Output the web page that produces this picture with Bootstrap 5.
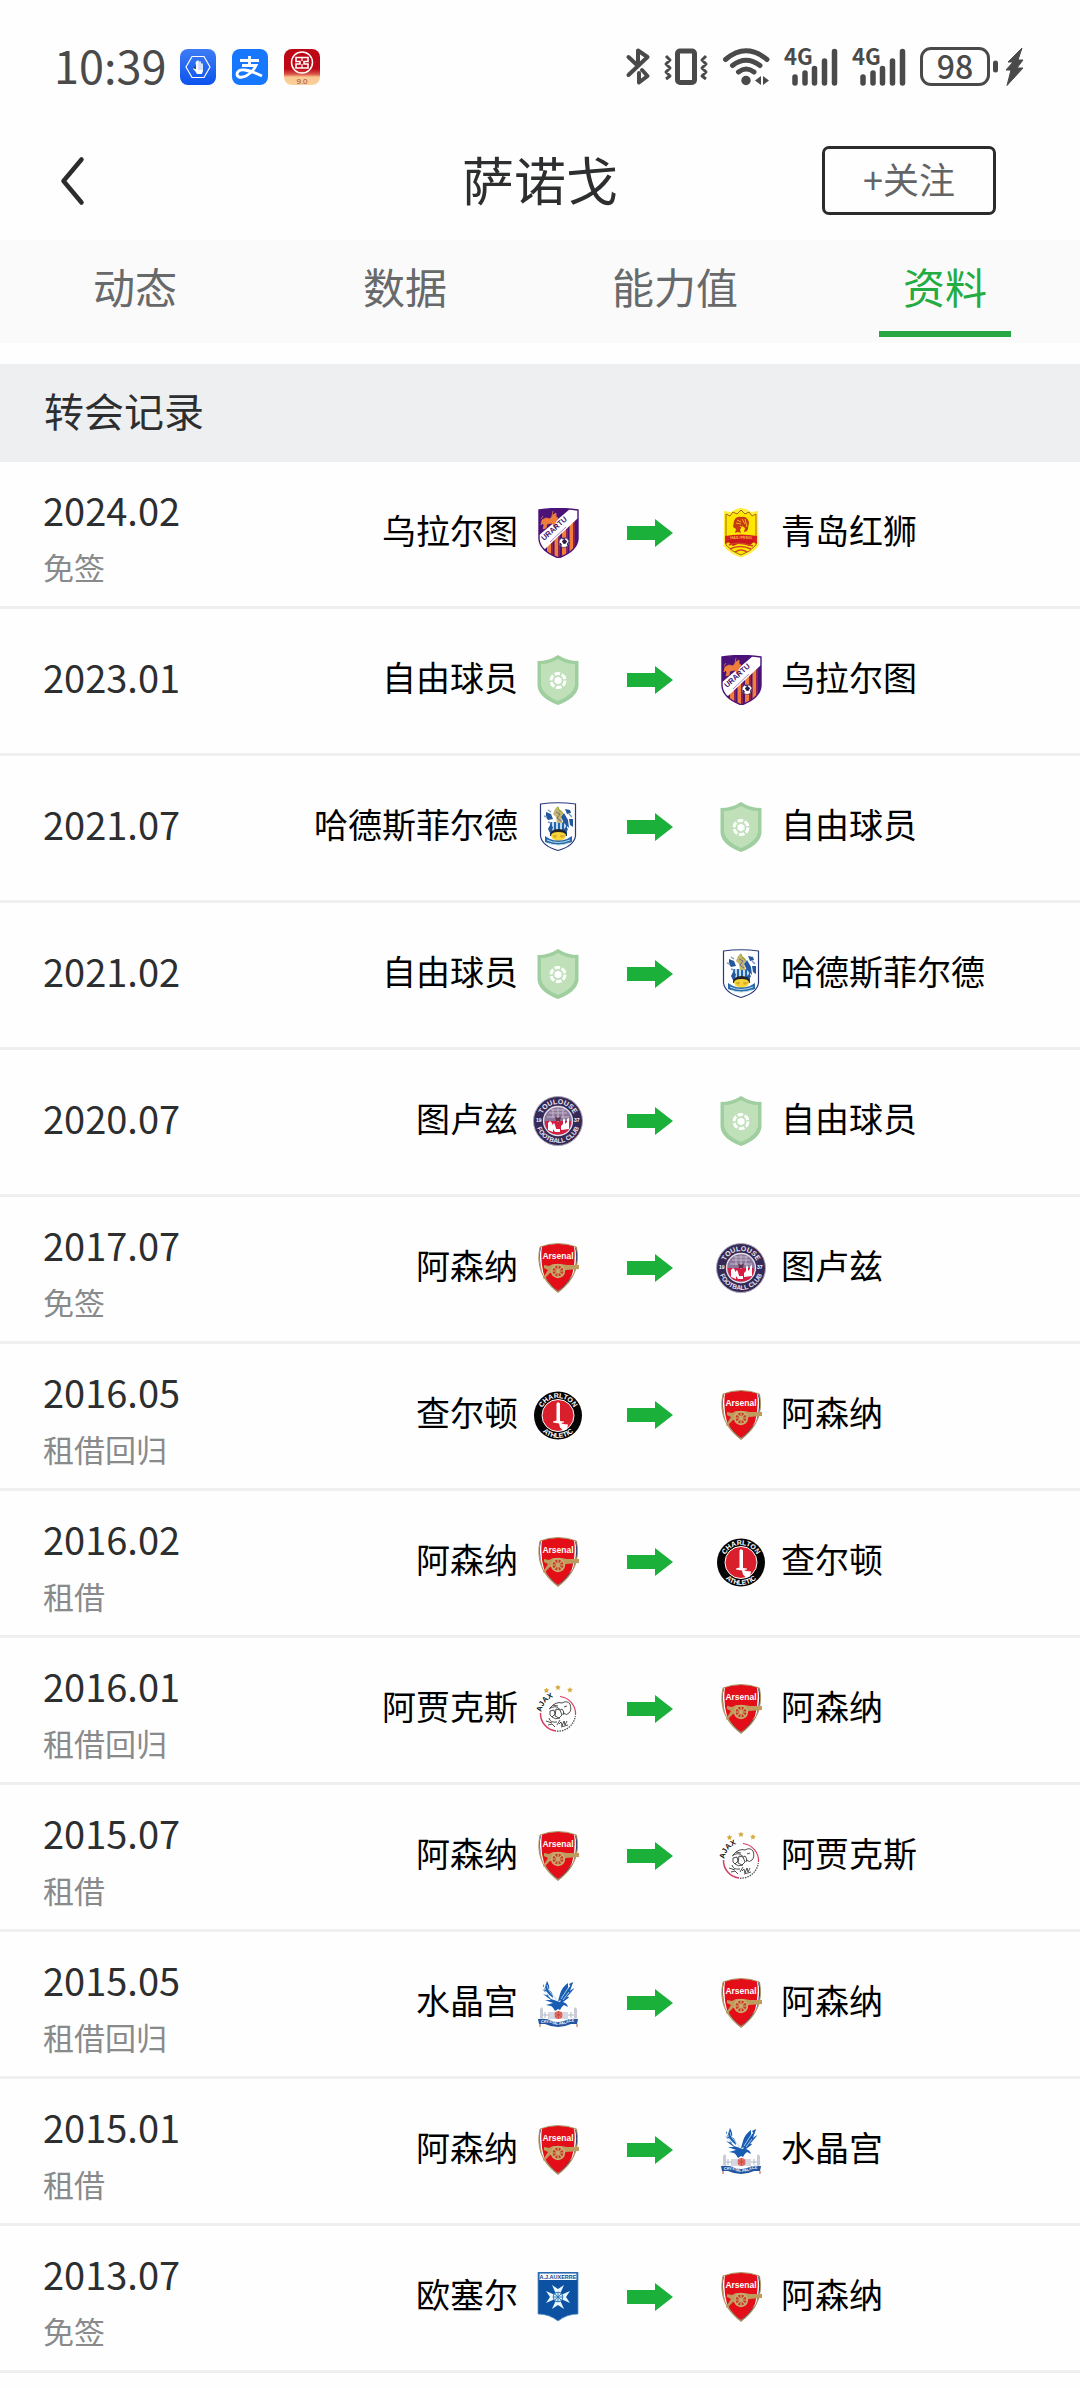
<!DOCTYPE html>
<html lang="zh-CN">
<head>
<meta charset="utf-8">
<meta name="viewport" content="width=device-width, initial-scale=1">
<title>萨诺戈 - 转会记录</title>
<link href="https://cdn.jsdelivr.net/npm/bootstrap@5.3.0/dist/css/bootstrap.min.css" rel="stylesheet">
<style>
  body { background: #fefefe; color: #2d2e2f; font-family: "Noto Sans CJK SC", "Liberation Sans", sans-serif; }
  svg { display: block; flex: none; overflow: visible; }
  .statusbar { height: 133px; padding: 0 56px 0 54px; color: #4a4a4a; }
  .clock { font-size: 45px; line-height: 45px; padding-bottom: 5px; margin-right: 14px; }
  .apps { gap: 16px; }
  .signals { gap: 14px; }
  .battery { width: 70px; height: 39px; border: 3px solid #4a4a4a; border-radius: 11px; font-size: 32px; line-height: 30px; font-weight: 500; text-align: center; }
  .titlebar { height: 107px; padding: 0 60px 12px; }
  .side { flex: 1 1 0; }
  .name-title { font-size: 52px; line-height: 60px; padding-bottom: 4px; margin: 0; font-weight: 400; }
  .back { border: 0; background: none; padding: 0; }
  .follow { width: 174px; height: 69px; padding: 0 0 5px; margin-right: 24px; border: 3px solid #2b2c2d; border-radius: 7px; font-size: 36px; line-height: 40px; color: #636465; }
  .tabs { height: 103px; background: #fafafa; margin-bottom: 21px; }
  .tabs .nav-link { height: 97px; padding: 17px 0 0; font-size: 42px; line-height: 57px; color: #67696a; width: 132px; margin: 0 auto; white-space: nowrap; }
  .tabs .nav-link.active { color: #22ac42; border-bottom: 6px solid #2aa745; }
  .section-title { background: #eeeff1; font-size: 40px; line-height: 60px; height: 98px; padding: 16px 44px 0; margin: 0; font-weight: 400; }
  .record { height: 147px; border-bottom: 3px solid #efefef; padding-bottom: 3px; }
  .origin { flex: 583 1 0; }
  .target { flex: 364 1 0; }
  .when { width: 240px; padding-left: 43px; font-size: 38px; line-height: 57px; padding-bottom: 6px; }
  .when.two { padding: 19px 0 0 43px; }
  .kind { font-size: 31px; line-height: 57px; color: #888a8b; }
  .club { color: #000; font-size: 34px; line-height: 44px; padding-bottom: 5px; white-space: nowrap; }
  .pair { gap: 15px; }
  .way { flex: 0 0 133px; }
</style>
<script src="https://cdn.jsdelivr.net/npm/bootstrap@5.3.0/dist/js/bootstrap.bundle.min.js"></script>
</head>
<body>

<svg width="0" height="0" class="position-absolute" aria-hidden="true">
  <defs>
    <clipPath id="uc"><path d="M6 2Q25-1 45 2V31Q44 43 25.500 50Q7 43 6 31Z"/></clipPath>
    <clipPath id="ac"><path d="M7 4Q25-3 43.500 4Q49 32 25 49.500Q1 32 7 4Z"/></clipPath>
    <symbol id="arrow" viewBox="0 0 46 28"><path d="M0 7H28V0L46 14L28 28V21H0Z" fill="#1ab03a"/></symbol>

    <symbol id="urartu" viewBox="0 0 50 50">
      <g clip-path="url(#uc)">
        <path d="M0 0H50V50H0Z" fill="#4b1278"/>
        <path d="M14 30H18V50H14ZM21.500 24H25V50H21.500ZM29 18H33V50H29ZM36.500 12H40V50H36.500Z" fill="#ef7d3c"/>
        <path d="M18 30H20V50H18ZM25 24H27V50H25ZM33 18H35V50H33ZM40 12H42V50H40Z" fill="#8f2150"/>
        <path d="M5 28L37 1H46V9L12 41L5 38Z" fill="#fff"/>
      </g>
      <path d="M8 17l1-5 4-2 4 1 3-4 3-2v4l2 1-3 5 1 4-2-1-2-3-5 1-1 4-3 1 1-4-2-2zM8 11l2-3M19 8l1-5" fill="#ef7d3c" stroke="#ef7d3c" stroke-width=".8"/>
      <text transform="translate(11 33) rotate(-42)" font-family="Liberation Sans" font-weight="700" font-size="7.500" fill="#3c126d">URARTU</text>
      <path d="M17 34L33 19" stroke="#a98bc4" stroke-width="1"/>
      <circle cx="31" cy="34.500" r="5" fill="#fff" stroke="#3a2260" stroke-width=".6"/>
      <path d="M29.500 33l2-1.500 2 1.500-1 2.300h-2zM26.500 35l1.700 1-.3 2M35.500 34l-1 2 .5 1.500M29 30.500l2 .5 1.500-1" fill="#2b1748" stroke="#2b1748"/>
      <path d="M6 2Q25-1 45 2V31Q44 43 25.500 50Q7 43 6 31Z" fill="none" stroke="#4b1278" stroke-width="1.400"/>
    </symbol>

    <symbol id="qingdao" viewBox="0 0 50 50">
      <path d="M8 3L15 4L20 1L25 0L30 1L35 4L42 3L42.500 38Q36 46 25 49.500Q14 46 7.500 38Z" fill="#ffee3d"/>
      <path d="M10 6L14 8L17 4L21 6L25 2L29 6L33 4L36 8L40 6V37Q34 44 25 47Q16 44 10 37Z" fill="#ffe800" stroke="#a7641b" stroke-width="1"/>
      <path d="M18 13q2-5 7-4 6-1 8 5l-1 7q-1 3-4 3l1-4-3-2-2 4 1 3-3-1-3 1 1-4-3-2z" fill="#c53a14"/>
      <path d="M21 12l4 2M26 11l3 5M24 18l4 3M20 15l5 1M29 11l2 8" stroke="#ffcf18" stroke-width=".8"/>
      <path d="M9 28Q25 25 41 28V36Q34 32 25 32Q16 32 9 36Z" fill="#d61f20"/>
      <text x="25" y="30.500" text-anchor="middle" font-family="Liberation Sans" font-weight="700" font-size="4" fill="#f8b23f">HAILIFENG</text>
      <path d="M11 33Q25 28 39 33L33 38Q25 33 17 38Z" fill="#c9161c"/>
      <path d="M13 37Q22 33 37 38M14 41Q24 36 35 41M19 44Q25 40 31 44" stroke="#d0442a" stroke-width="1.500" fill="none"/>
    </symbol>

    <symbol id="free" viewBox="0 0 50 50">
      <path d="M25 0Q34 6 45.500 6V31Q44 43 25 50Q6 43 4.500 31V6Q16 6 25 0Z" fill="#9fce9f"/>
      <path d="M25 4Q33 9 42 9V30Q40 40 25 46Q10 40 8 30V9Q17 9 25 4Z" fill="#bfe0b9"/>
      <path d="M25 21.500l3.500 2v4l-3.500 2-3.500-2v-4z" fill="#fff"/>
      <circle cx="25" cy="25.500" r="7" fill="none" stroke="#fff" stroke-width="3" stroke-dasharray="5.600 1.730"/>
    </symbol>

    <symbol id="huddersfield" viewBox="0 0 50 50">
      <path d="M7.500 2Q25-.5 42.500 2V34Q41 44 25 48.500Q9 44 7.500 34Z" fill="#fff" stroke="#29397e" stroke-width="1.200"/>
      <path d="M17 20h17v13H17z" fill="#1f68b3"/>
      <path d="M20 19v14M24 19v14M28 19v14M32 19v14" stroke="#fff" stroke-width="1.500"/>
      <path d="M22 7l3-3 1 3 4 3-2 6 2 5h-6l-1-6-3-3z" fill="#c6b56e"/>
      <path d="M23 10l4 2-3 4 4 3" stroke="#6d6b87" fill="none"/><path d="M27 8l4 6M25 5l2 5" stroke="#98a92c"/>
      <path d="M31 11l4 7 1 8-5-5-3-6zM13 10l5 2 2 5-5 1-2-3zM32 7l5 1 1 3-4 1zM36 17h4v8l-3-2zM11 20l2-1M15 27l2-4 3 2-2 8zM35 27l-2-2-3 3 2 5z" fill="#24579c"/>
      <path d="M11 14l3 1M15 20l3 1M36 12l3 3M15 8l3 2" stroke="#809ac4" stroke-width="1.500"/>
      <path d="M17 34Q17 27 25.500 27Q34 27 34 34Z" fill="#21242a"/>
      <path d="M18 33Q19 30 25.500 30Q32 30 33 33Q33 38 25.500 39Q18 38 18 33Z" fill="#f7d438"/>
      <path d="M22 33v3M29 33v3M20 34h4M27 34h5" stroke="#c29722" stroke-width=".8"/>
      <path d="M12 34L17 37Q25 40 34 37L39 34V40Q25 46 12 40Z" fill="#2869a9"/>
      <path d="M14 38Q25 43 37 38M15 41Q25 45 36 41" fill="none" stroke="#b8dcec" stroke-width="1"/>
    </symbol>

    <symbol id="toulouse" viewBox="0 0 50 50">
      <circle cx="25" cy="25" r="24.500" fill="#352a57" stroke="#aaa3b8" stroke-width="1"/>
      <circle cx="25" cy="25" r="14.500" fill="#8b779b" stroke="#e5dfe8" stroke-width="1.300"/>
      <path d="M12 25H38Q38 38 25 38.500Q12 38 12 25Z" fill="#d51e42"/>
      <path d="M16 17h18M14 21h22M18 14h14M25 12v14M20 13v9M30 13v9" stroke="#c5b7c8" stroke-width="1"/>
      <path d="M22 20l3 2 3-2-1 5h-4z" fill="#5c3652"/>
      <path d="M15 34v-7l2-2 2 2v2l2-2 1 2 2 7h-2l-2-3v3zM28 34v-4l2-2v-4l1-2 1 2v4l2-2v-3l2-1v11zM23 33h4v3h-4z" fill="#fff"/>
      <path id="tt" d="M8 25A17 17 0 0 1 42 25" fill="none"/><path id="tb" d="M3 25A22 22 0 0 0 47 25" fill="none"/>
      <text font-family="Liberation Sans" font-weight="700" font-size="7" fill="#ece8f0" text-anchor="middle"><textPath href="#tt" startOffset="50%">TOULOUSE</textPath></text>
      <text font-family="Liberation Sans" font-weight="700" font-size="6.500" fill="#ece8f0" text-anchor="middle"><textPath href="#tb" startOffset="50%">FOOTBALL CLUB</textPath></text>
      <text x="3" y="26" font-family="Liberation Sans" font-weight="700" font-size="5" fill="#fff">19</text><text x="41" y="26" font-family="Liberation Sans" font-weight="700" font-size="5" fill="#fff">37</text>
    </symbol>

    <symbol id="arsenal" viewBox="0 0 50 50">
      <g clip-path="url(#ac)">
        <path d="M0 0H50V50H0Z" fill="#c5a55d"/>
        <path d="M7 5Q25-1 43.500 5Q48 31 25 48.500Q3 31 7 5Z" fill="#243b70"/>
        <path d="M8 4Q25-1 42 4Q45 17 40 32L25 48L10 32Q5 17 8 4Z" fill="#fff"/>
        <path d="M9 3Q25-1 41 3Q43 18 39 32Q34 41 25 48Q16 41 11 32Q7 18 9 3Z" fill="#e30e17"/>
      </g>
      <path d="M7 4Q25-3 43.500 4Q49 32 25 49.500Q1 32 7 4Z" fill="none" stroke="#a98b60" stroke-width=".9"/>
      <text x="25" y="15.500" text-anchor="middle" font-family="Liberation Sans" font-weight="700" font-size="8.500" fill="#fff">Arsenal</text>
      <path d="M11 22l5 1 4-2h8l6 1h12v4l-13 1-5 3H17l-6 6-1-1 5-8-4-2z" fill="#bd9c5d"/>
      <circle cx="25" cy="28" r="6.300" fill="#c83a27" stroke="#c9ad70" stroke-width="1.700"/>
      <path d="M25 21v14M18 28h14M20 23l10 10M30 23L20 33" stroke="#c9ad70" stroke-width="1.200"/>
    </symbol>

    <symbol id="charlton" viewBox="0 0 50 50">
      <circle cx="25" cy="25.500" r="24" fill="#050505"/>
      <circle cx="25" cy="25.500" r="16" fill="#d91f2c" stroke="#fff" stroke-width="1"/>
      <path d="M23.500 13.500L25 12l2 1.500V31l4 .5v1l-3 .6 2 1 5 .4-1 5-4 1-3-3-1-4-6-1v-1l3.500-1z" fill="#fff"/>
      <path id="ct" d="M7.500 25.500A17.500 17.500 0 0 1 42.500 25.500" fill="none"/><path id="cb" d="M2.500 25.500A22.500 22.500 0 0 0 47.500 25.500" fill="none"/>
      <text font-family="Liberation Sans" font-weight="700" font-size="7" fill="#fff" text-anchor="middle"><textPath href="#ct" startOffset="50%">CHARLTON</textPath></text>
      <text font-family="Liberation Sans" font-weight="700" font-size="7" fill="#fff" text-anchor="middle"><textPath href="#cb" startOffset="50%">ATHLETIC</textPath></text>
    </symbol>

    <symbol id="ajax" viewBox="0 0 50 50">
      <g fill="#d5aa42"><path id="st" d="M13.500 3.500l.8 1.800 2 .2-1.400 1.400.3 2-1.700-1-1.800 1 .3-2-1.400-1.400 2-.2z"/><use href="#st" x="11.500" y="-3"/><use href="#st" x="23.500" y="-.5"/></g>
      <path d="M27 12.500A17.500 17.500 0 0 1 42.500 31" fill="none" stroke="#d53d62" stroke-width="1.200"/>
      <path d="M7.500 29A17.500 17.500 0 0 0 23 47" fill="none" stroke="#d53d62" stroke-width="1.500"/>
      <path d="M24 47.200A17.500 17.500 0 0 0 42.300 32" fill="none" stroke="#555" stroke-width="1.300" stroke-dasharray="1.500 1"/>
      <path id="aj" d="M8.500 28A17 17 0 0 1 27 12.500" fill="none"/>
      <text font-family="Liberation Sans" font-weight="700" font-size="7.500" fill="#111"><textPath href="#aj">AJAX</textPath></text>
      <path d="M17 24Q23 17 29 19Q34 16 37 20Q39 26 36 29Q34 32 30 29M16 25q6-4 9-1t4 1q3 3 1 6M17 27l4-1 1 4-3 3-2-2zM23 25l4 1 2 5-3 3-4-2zM19 33q3 3 8 1M16 34q1 5 8 4M27 36l-3 5M13 37l6 2M15 41l4-1 3 3M26 40l2-2 1 4 2-5 1 4 2-4M28 43l7-2M20 21l5 1M31 23l3-1" fill="none" stroke="#222" stroke-width=".8"/>
    </symbol>

    <symbol id="palace" viewBox="0 0 50 50">
      <path d="M11 6Q10 14 18 21L27 24Q30 17 40 4L37 13Q43 8 40 12L34 19Q38 18 34 21L30 24Q34 25 35 29L31 27Q28 29 27 32L25 31L22 33Q20 29 18 28L13 27L20 25L12 22L18 22L10 16L16 18L9 11L14 14L10 8ZM14 3Q17 8 16 12Q20 14 20 20Q13 15 12 9Z" fill="#195db2"/>
      <path d="M35 5Q29 9 27 16L25 23L30 22L35 14ZM36 6L40 4L38 9Z" fill="#195db2"/>
      <path d="M14 7Q15 14 24 21M37 7L28 21M36 14L30 22M20 17l3 5" stroke="#c9e5f7" stroke-width=".8" fill="none"/>
      <path d="M15 34h20v7H15z" fill="#d5d8df"/><path d="M7 31l2-2 1 2v9H7zM41 31l1-2 2 2v9h-3z" fill="#c9cbd4"/>
      <path d="M10 37h6M35 37h6M12 34v6M38 34v6" stroke="#aeb8c9" stroke-width="1"/>
      <circle cx="25.500" cy="37" r="4" fill="#e27268"/><path d="M22 35l7 4M22 39l7-4M25.500 33v8" stroke="#c3423f" stroke-width=".7"/>
      <path d="M5 41Q14 40 19 43Q25 45 31 43Q37 40 45 41L44 46L38 46Q25 52 12 46L6 46Z" fill="#2254a2"/>
      <path id="cp" d="M8 45Q15 44 20 46Q26 48 32 46Q38 43 43 44" fill="none"/>
      <text font-family="Liberation Sans" font-weight="700" font-size="3.800" fill="#fff"><textPath href="#cp">CRYSTAL PALACE</textPath></text>
      <path d="M7 46v3M44 46v3" stroke="#cc8e87" stroke-width="1.500"/>
    </symbol>

    <symbol id="auxerre" viewBox="0 0 50 50">
      <path d="M5 0H45V42Q34 42 25 49Q16 42 5 42Z" fill="#0c51a2" stroke="#5a91c4" stroke-width=".8"/>
      <path d="M6.500 1.500H43.500V8H6.500Z" fill="#f8fbff"/>
      <text x="25" y="7" text-anchor="middle" font-family="Liberation Sans" font-weight="700" font-size="5.500" fill="#174680">A.J.AUXERRE</text>
      <path id="ax" d="M23 22L19 13L25 17L31 13L27 22Z" fill="#e8f8ff"/>
      <use href="#ax" transform="rotate(90 25 25)"/><use href="#ax" transform="rotate(180 25 25)"/><use href="#ax" transform="rotate(270 25 25)"/>
      <circle cx="25" cy="25" r="4.800" fill="#c9eafa" stroke="#2769ac" stroke-width="1"/>
      <path d="M25 21v8M21 25h8M22 22l6 6M28 22l-6 6" stroke="#2769ac" stroke-width=".8"/>
    </symbol>

    <symbol id="cell" viewBox="0 0 54 39" overflow="visible">
      <text x="0" y="18" font-family="Noto Sans CJK SC, sans-serif" font-weight="700" font-size="22" fill="#4a4a4a">4G</text>
      <path d="M11 30v6M21 26v10M30.500 21.500V36M40.500 14v22M50.500 4.500V36" stroke="#4a4a4a" stroke-width="5.500" stroke-linecap="round"/>
    </symbol>
    <linearGradient id="blue" x2="0" y2="1"><stop stop-color="#3e7cf5"/><stop offset="1" stop-color="#0c53ee"/></linearGradient>
    <linearGradient id="bank" x2="0" y2="1"><stop offset=".55" stop-color="#bd0716"/><stop offset=".7" stop-color="#d9564a"/><stop offset=".78" stop-color="#f9c990"/><stop offset="1" stop-color="#fbd09c"/></linearGradient>
  </defs>
</svg>

<div class="statusbar d-flex align-items-center justify-content-between">
  <div class="d-flex align-items-center">
    <span class="clock">10:39</span>
    <div class="apps d-flex">
      <svg width="36" height="36" viewBox="0 0 36 36"><rect width="36" height="36" rx="8" fill="url(#blue)"/><path d="M12 7.500H24L30 18L24 28.500H12L6 18Z" fill="none" stroke="#fff" stroke-width="1.200"/><path d="M14 20l2.500 2V13M18 21v-9M20 21v-8M22 22v-7" stroke="#fff" stroke-width="1.600" stroke-linecap="round"/><path d="M14 20l3 1h6l-1 4h-5z" fill="#fff"/></svg>
      <svg width="36" height="36" viewBox="0 0 36 36"><rect width="36" height="36" rx="8" fill="#1777ff"/><path d="M8 11.500H27M17.500 7V16M10 16.500H24Q21 23 14 27Q7 30 5 26Q5 20 13 21Q20 22 30 27" fill="none" stroke="#fff" stroke-width="2.800"/></svg>
      <svg width="36" height="36" viewBox="0 0 36 36"><rect width="36" height="36" rx="8" fill="url(#bank)"/><circle cx="18" cy="13.500" r="10.500" fill="none" stroke="#fff" stroke-width="1.500"/><path d="M12 8.500H24V12.500H20V15H24V19H12V15H16V12.500H12Z" fill="none" stroke="#fff" stroke-width="1.600"/><path d="M18 8v4M18 15v4" stroke="#fff" stroke-width="1.200"/><text x="18" y="34.500" text-anchor="middle" font-family="Liberation Sans" font-size="8" fill="#a3452d">9.0</text></svg>
    </div>
  </div>
  <div class="signals d-flex">
    <svg width="24" height="39" viewBox="0 0 24 39" fill="none" stroke="#4a4a4a" stroke-width="4" stroke-linejoin="round" stroke-linecap="round"><path d="M2.500 10L12 19M12 16V3.500L21.500 10L2.500 28M16 23L21.500 29L13 35.500V26"/></svg>
    <svg width="44" height="39" viewBox="0 0 44 39" fill="none" stroke="#4a4a4a"><rect x="13.500" y="4" width="17" height="31.500" rx="2.500" stroke-width="5"/><path d="M2 9l4 4-4 4 4 4-4 4 4 4-4 3M42 9l-4 4 4 4-4 4 4 4-4 4 4 3" stroke-width="3" stroke-linejoin="round"/></svg>
    <svg width="48" height="39" viewBox="0 0 48 39" fill="none" stroke="#4a4a4a" stroke-width="5" stroke-linecap="round"><path d="M3.500 12.500Q24-5 45 12.500M10.500 18.500Q24 8 38 18.500M16.500 25Q24 19 32 25"/><circle cx="24" cy="33.500" r="4.700" fill="#4a4a4a" stroke="none"/><path d="M33 33.500l6-4.500v9zM41 29l6 4.500-6 4.500z" fill="#4a4a4a" stroke="none"/></svg>
    <svg width="54" height="39"><use href="#cell"/></svg>
    <svg width="54" height="39"><use href="#cell"/></svg>
    <div class="d-flex"><div class="battery">98</div><svg width="34" height="39" viewBox="0 0 34 39"><path d="M5.500 16v7" stroke="#4a4a4a" stroke-width="5" stroke-linecap="round"/><path d="M32 1L18 15H23L16 23H21L17 38.500L33 21H27L33 13H28Z" fill="#4a4a4a" stroke="#4a4a4a" stroke-linejoin="round"/></svg></div>
  </div>
</div>

<header class="titlebar d-flex align-items-center">
  <div class="side d-flex"><button class="back" type="button" aria-label="返回"><svg width="26" height="50" viewBox="0 0 26 50"><path d="M21.500 3.500L3.500 25L21.500 46.500" fill="none" stroke="#2b2c2d" stroke-width="4.500" stroke-linecap="round" stroke-linejoin="round"/></svg></button></div>
  <h1 class="name-title">萨诺戈</h1>
  <div class="side d-flex justify-content-end"><button class="btn follow" type="button">+关注</button></div>
</header>

<nav class="tabs nav nav-fill flex-nowrap text-center">
  <div class="col-3"><a class="nav-link" href="#">动态</a></div>
  <div class="col-3"><a class="nav-link" href="#">数据</a></div>
  <div class="col-3"><a class="nav-link" href="#">能力值</a></div>
  <div class="col-3"><a class="nav-link active" aria-current="page" href="#">资料</a></div>
</nav>

<main>
  <h2 class="section-title">转会记录</h2>
  <ul class="list-unstyled m-0">
    <li class="record d-flex"><div class="origin d-flex"><div class="when two">2024.02<div class="kind">免签</div></div><div class="pair d-flex align-items-center ms-auto"><span class="club">乌拉尔图</span><svg width="50" height="50"><use href="#urartu"/></svg></div></div><div class="way d-flex align-items-center justify-content-center"><svg width="46" height="28"><use href="#arrow"/></svg></div><div class="target pair d-flex align-items-center"><svg width="50" height="50"><use href="#qingdao"/></svg><span class="club">青岛红狮</span></div></li>
    <li class="record d-flex"><div class="origin d-flex"><div class="when align-self-center">2023.01</div><div class="pair d-flex align-items-center ms-auto"><span class="club">自由球员</span><svg width="50" height="50"><use href="#free"/></svg></div></div><div class="way d-flex align-items-center justify-content-center"><svg width="46" height="28"><use href="#arrow"/></svg></div><div class="target pair d-flex align-items-center"><svg width="50" height="50"><use href="#urartu"/></svg><span class="club">乌拉尔图</span></div></li>
    <li class="record d-flex"><div class="origin d-flex"><div class="when align-self-center">2021.07</div><div class="pair d-flex align-items-center ms-auto"><span class="club">哈德斯菲尔德</span><svg width="50" height="50"><use href="#huddersfield"/></svg></div></div><div class="way d-flex align-items-center justify-content-center"><svg width="46" height="28"><use href="#arrow"/></svg></div><div class="target pair d-flex align-items-center"><svg width="50" height="50"><use href="#free"/></svg><span class="club">自由球员</span></div></li>
    <li class="record d-flex"><div class="origin d-flex"><div class="when align-self-center">2021.02</div><div class="pair d-flex align-items-center ms-auto"><span class="club">自由球员</span><svg width="50" height="50"><use href="#free"/></svg></div></div><div class="way d-flex align-items-center justify-content-center"><svg width="46" height="28"><use href="#arrow"/></svg></div><div class="target pair d-flex align-items-center"><svg width="50" height="50"><use href="#huddersfield"/></svg><span class="club">哈德斯菲尔德</span></div></li>
    <li class="record d-flex"><div class="origin d-flex"><div class="when align-self-center">2020.07</div><div class="pair d-flex align-items-center ms-auto"><span class="club">图卢兹</span><svg width="50" height="50"><use href="#toulouse"/></svg></div></div><div class="way d-flex align-items-center justify-content-center"><svg width="46" height="28"><use href="#arrow"/></svg></div><div class="target pair d-flex align-items-center"><svg width="50" height="50"><use href="#free"/></svg><span class="club">自由球员</span></div></li>
    <li class="record d-flex"><div class="origin d-flex"><div class="when two">2017.07<div class="kind">免签</div></div><div class="pair d-flex align-items-center ms-auto"><span class="club">阿森纳</span><svg width="50" height="50"><use href="#arsenal"/></svg></div></div><div class="way d-flex align-items-center justify-content-center"><svg width="46" height="28"><use href="#arrow"/></svg></div><div class="target pair d-flex align-items-center"><svg width="50" height="50"><use href="#toulouse"/></svg><span class="club">图卢兹</span></div></li>
    <li class="record d-flex"><div class="origin d-flex"><div class="when two">2016.05<div class="kind">租借回归</div></div><div class="pair d-flex align-items-center ms-auto"><span class="club">查尔顿</span><svg width="50" height="50"><use href="#charlton"/></svg></div></div><div class="way d-flex align-items-center justify-content-center"><svg width="46" height="28"><use href="#arrow"/></svg></div><div class="target pair d-flex align-items-center"><svg width="50" height="50"><use href="#arsenal"/></svg><span class="club">阿森纳</span></div></li>
    <li class="record d-flex"><div class="origin d-flex"><div class="when two">2016.02<div class="kind">租借</div></div><div class="pair d-flex align-items-center ms-auto"><span class="club">阿森纳</span><svg width="50" height="50"><use href="#arsenal"/></svg></div></div><div class="way d-flex align-items-center justify-content-center"><svg width="46" height="28"><use href="#arrow"/></svg></div><div class="target pair d-flex align-items-center"><svg width="50" height="50"><use href="#charlton"/></svg><span class="club">查尔顿</span></div></li>
    <li class="record d-flex"><div class="origin d-flex"><div class="when two">2016.01<div class="kind">租借回归</div></div><div class="pair d-flex align-items-center ms-auto"><span class="club">阿贾克斯</span><svg width="50" height="50"><use href="#ajax"/></svg></div></div><div class="way d-flex align-items-center justify-content-center"><svg width="46" height="28"><use href="#arrow"/></svg></div><div class="target pair d-flex align-items-center"><svg width="50" height="50"><use href="#arsenal"/></svg><span class="club">阿森纳</span></div></li>
    <li class="record d-flex"><div class="origin d-flex"><div class="when two">2015.07<div class="kind">租借</div></div><div class="pair d-flex align-items-center ms-auto"><span class="club">阿森纳</span><svg width="50" height="50"><use href="#arsenal"/></svg></div></div><div class="way d-flex align-items-center justify-content-center"><svg width="46" height="28"><use href="#arrow"/></svg></div><div class="target pair d-flex align-items-center"><svg width="50" height="50"><use href="#ajax"/></svg><span class="club">阿贾克斯</span></div></li>
    <li class="record d-flex"><div class="origin d-flex"><div class="when two">2015.05<div class="kind">租借回归</div></div><div class="pair d-flex align-items-center ms-auto"><span class="club">水晶宫</span><svg width="50" height="50"><use href="#palace"/></svg></div></div><div class="way d-flex align-items-center justify-content-center"><svg width="46" height="28"><use href="#arrow"/></svg></div><div class="target pair d-flex align-items-center"><svg width="50" height="50"><use href="#arsenal"/></svg><span class="club">阿森纳</span></div></li>
    <li class="record d-flex"><div class="origin d-flex"><div class="when two">2015.01<div class="kind">租借</div></div><div class="pair d-flex align-items-center ms-auto"><span class="club">阿森纳</span><svg width="50" height="50"><use href="#arsenal"/></svg></div></div><div class="way d-flex align-items-center justify-content-center"><svg width="46" height="28"><use href="#arrow"/></svg></div><div class="target pair d-flex align-items-center"><svg width="50" height="50"><use href="#palace"/></svg><span class="club">水晶宫</span></div></li>
    <li class="record d-flex"><div class="origin d-flex"><div class="when two">2013.07<div class="kind">免签</div></div><div class="pair d-flex align-items-center ms-auto"><span class="club">欧塞尔</span><svg width="50" height="50"><use href="#auxerre"/></svg></div></div><div class="way d-flex align-items-center justify-content-center"><svg width="46" height="28"><use href="#arrow"/></svg></div><div class="target pair d-flex align-items-center"><svg width="50" height="50"><use href="#arsenal"/></svg><span class="club">阿森纳</span></div></li>
  </ul>
</main>
</body>
</html>
